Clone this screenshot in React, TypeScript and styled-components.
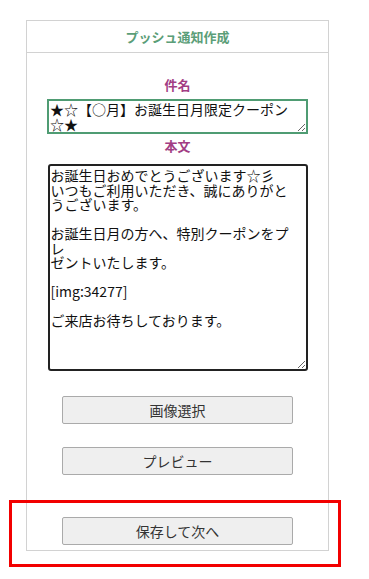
import * as React from 'react';
import styled, { createGlobalStyle } from 'styled-components'

const Global = createGlobalStyle`
  body {
    margin: 0;
    background: #fff;
    font-family: "Noto Sans CJK JP", "Liberation Sans", sans-serif;
  }
`

const subject = '★☆【○月】お誕生日月限定クーポン☆★'
const body = [
  'お誕生日おめでとうございます☆彡',
  'いつもご利用いただき、誠にありがと',
  'うございます。',
  '',
  'お誕生日月の方へ、特別クーポンをプ',
  'レ',
  'ゼントいたします。',
  '',
  '[img:34277]',
  '',
  'ご来店お待ちしております。',
].join('\n')

const App = () => {
  return(
    <>
      <Global />
      <Page>
        <Panel>
          <Header>
            <Title>プッシュ通知作成</Title>
          </Header>
          <Content>
            <Label top={24}>件名</Label>
            <SubjectArea readOnly value={subject} />
            <Label top={4}>本文</Label>
            <BodyArea readOnly value={body} />
            <Button top={25}>画像選択</Button>
            <Button top={23}>プレビュー</Button>
            <Button top={42}>保存して次へ</Button>
          </Content>
        </Panel>
        <Highlight />
      </Page>
    </>
  )
}

const Page = styled.div`
  position: relative;
  width: 369px;
  height: 579px;
  padding: 20px 0 0 26px;
  box-sizing: border-box;
`

const Panel = styled.div`
  width: 303px;
  box-sizing: border-box;
  border: 1.5px solid #d2d2d2;
  background: #fff;
`

const Header = styled.div`
  height: 31px;
  display: flex;
  align-items: center;
  justify-content: center;
  border-bottom: 1.5px solid #d2d2d2;
`

const Title = styled.div`
  color: #5b9e78;
  font-size: 13px;
  font-weight: bold;
  line-height: 16px;
`

const Content = styled.div`
  display: flex;
  flex-direction: column;
  align-items: center;
  padding-bottom: 5px;
`

const Label = styled.div<{ top: number }>`
  margin-top: ${p => p.top}px;
  color: #a23d84;
  font-size: 13px;
  font-weight: bold;
  line-height: 16px;
  height: 16px;
`

const Area = styled.textarea`
  box-sizing: border-box;
  margin: 0;
  padding: 2px 1px;
  font-family: "Noto Sans CJK JP", "Liberation Sans", sans-serif;
  font-size: 14px;
  color: #111;
  background: #fff;
  overflow: hidden;
  outline: none;
`

const SubjectArea = styled(Area)`
  margin-top: 6px;
  width: 261px;
  height: 35px;
  border: 2px solid #4f9c73;
  line-height: 15px;
  padding-top: 1px;
`

const BodyArea = styled(Area)`
  margin-top: 10px;
  width: 260px;
  height: 207px;
  border: 2px solid #222;
  border-radius: 3px;
  line-height: 14.5px;
  padding-top: 2px;
`

const Button = styled.button<{ top: number }>`
  margin-top: ${p => p.top}px;
  width: 231px;
  height: 28px;
  box-sizing: border-box;
  background: #efefef;
  border: 1.5px solid #aaaaaa;
  border-radius: 2px;
  font-family: "Noto Sans CJK JP", "Liberation Sans", sans-serif;
  font-size: 14px;
  color: #333;
  padding: 0;
`

const Highlight = styled.div`
  position: absolute;
  left: 9px;
  top: 500px;
  width: 332px;
  height: 67px;
  box-sizing: border-box;
  border: 3px solid #f20000;
  pointer-events: none;
`

export default App;
